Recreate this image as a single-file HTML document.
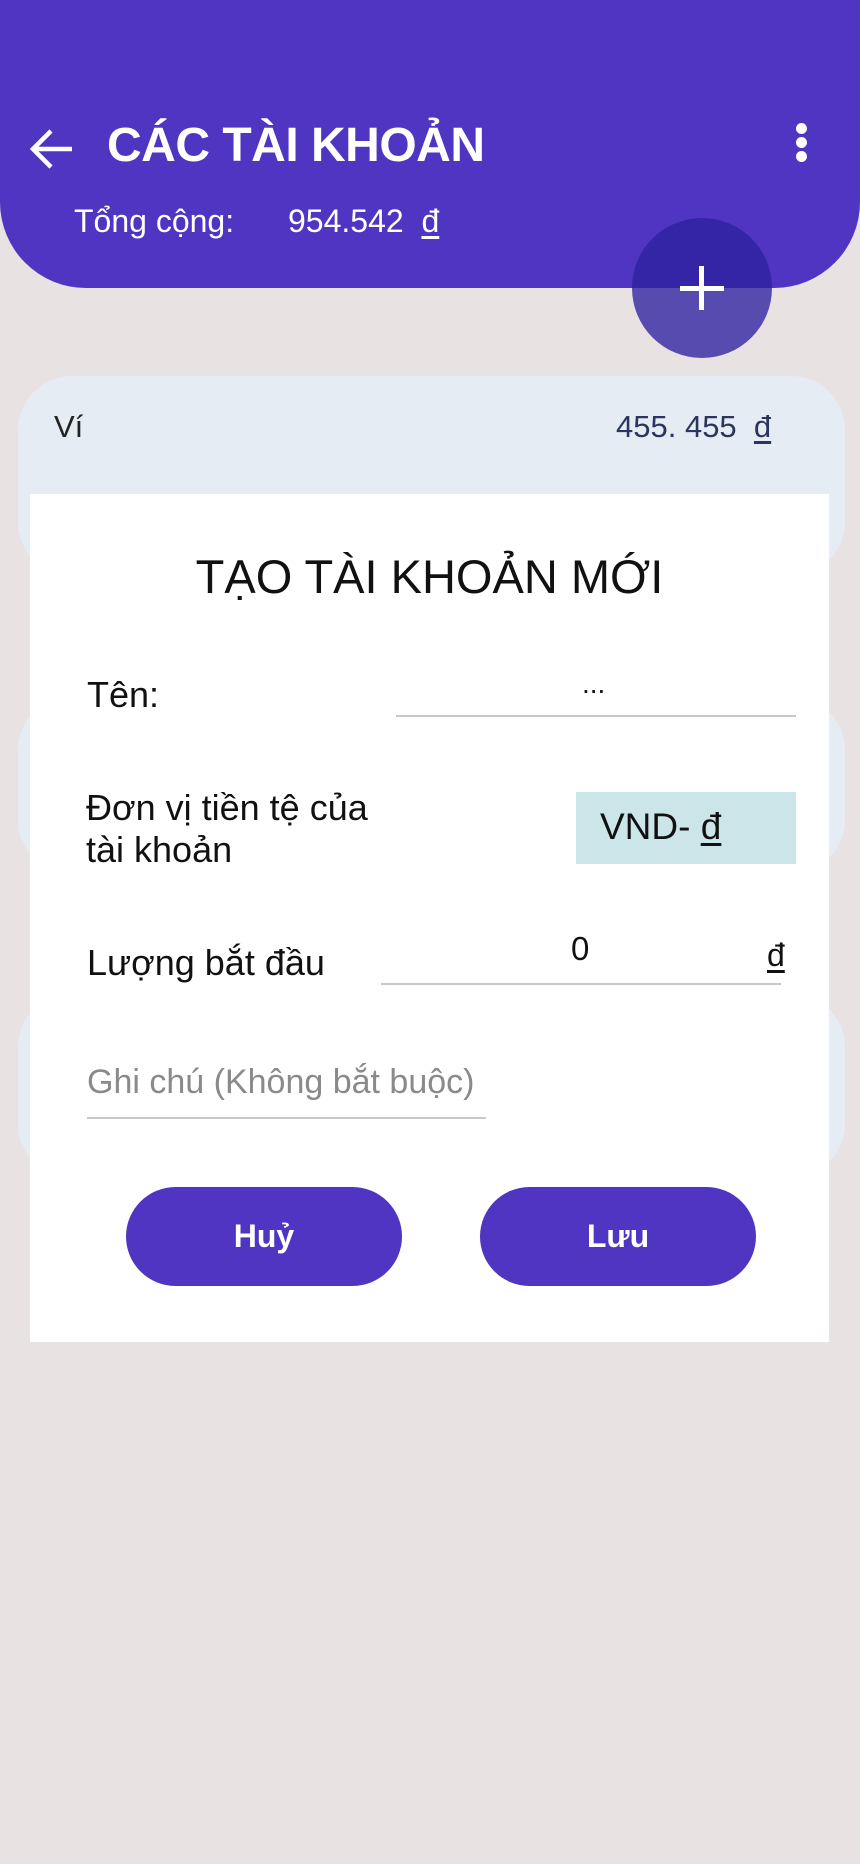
<!DOCTYPE html>
<html><head><meta charset="utf-8"><style>
*{margin:0;padding:0;box-sizing:border-box}
body{width:860px;height:1864px;background:#e8e2e2;position:relative;overflow:hidden;font-family:"Liberation Sans","Noto Sans CJK SC",sans-serif}
.abs{position:absolute}
.hdr{left:0;top:0;width:860px;height:288px;background:#4f35c2;border-radius:0 0 86px 86px}
.card{left:18px;width:827px;background:#e5ecf4;border-radius:54px}
.dlg{left:30px;top:494px;width:799px;height:848px;background:#fff}
.lbl{color:#111;font-size:36px;line-height:42px}
.line{height:2px;background:#c8c8c8}
.btn{width:276px;height:99px;border-radius:50px;background:#4f35c2;color:#fff;font-weight:bold;font-size:32px;display:flex;align-items:center;justify-content:center}
u{text-decoration:underline;text-underline-offset:4px}
</style></head><body>
<div class="abs hdr"></div>
<svg class="abs" style="left:28px;top:128px" width="46" height="42" viewBox="0 0 46 42"><path d="M44 21H5M23 3L5 21l18 18" stroke="#fff" stroke-width="4.5" fill="none"/></svg>
<div class="abs" style="left:107px;top:118px;color:#fff;font-weight:bold;font-size:48px;line-height:56px;letter-spacing:-0.5px">CÁC TÀI KHOẢN</div>
<div class="abs" style="left:796px;top:123px;width:11px;height:11px;border-radius:6px;background:#fff"></div>
<div class="abs" style="left:796px;top:137px;width:11px;height:11px;border-radius:6px;background:#fff"></div>
<div class="abs" style="left:796px;top:151px;width:11px;height:11px;border-radius:6px;background:#fff"></div>
<div class="abs" style="left:74px;top:202px;color:#fff;font-size:32px;line-height:38px">Tổng cộng:</div>
<div class="abs" style="left:288px;top:202px;color:#fff;font-size:32px;line-height:38px">954.542 &nbsp;<u>đ</u></div>
<div class="abs" style="left:632px;top:218px;width:140px;height:140px;border-radius:70px;overflow:hidden">
<div style="height:70px;background:#3424a6"></div><div style="height:70px;background:#584bb0"></div></div>
<div class="abs" style="left:680px;top:286px;width:44px;height:5px;background:#fff"></div>
<div class="abs" style="left:699px;top:266px;width:5px;height:44px;background:#fff"></div>
<div class="abs card" style="top:376px;height:200px"></div>
<div class="abs card" style="top:696px;height:178px"></div>
<div class="abs card" style="top:993px;height:185px"></div>
<div class="abs" style="left:54px;top:408px;color:#222;font-size:31px;line-height:38px">Ví</div>
<div class="abs" style="left:616px;top:408px;color:#2a3560;font-size:31px;line-height:38px">455. 455 &nbsp;<u>đ</u></div>
<div class="abs dlg"></div>
<div class="abs" style="left:30px;width:799px;top:549px;text-align:center;font-size:47px;line-height:56px;color:#111">TẠO TÀI KHOẢN MỚI</div>
<div class="abs lbl" style="left:87px;top:674px">Tên:</div>
<div class="abs" style="left:582px;top:668px;font-size:28px;color:#111">...</div>
<div class="abs line" style="left:396px;top:715px;width:400px"></div>
<div class="abs lbl" style="left:86px;top:787px">Đơn vị tiền tệ của<br>tài khoản</div>
<div class="abs" style="left:576px;top:792px;width:220px;height:72px;background:#cce5e8"></div>
<div class="abs" style="left:600px;top:806px;font-size:37px;line-height:42px;color:#111">VND- <u>đ</u></div>
<div class="abs lbl" style="left:87px;top:942px">Lượng bắt đầu</div>
<div class="abs" style="left:571px;top:930px;font-size:33px;color:#111">0</div>
<div class="abs" style="left:767px;top:937px;font-size:32px;color:#111"><u>đ</u></div>
<div class="abs line" style="left:381px;top:983px;width:400px"></div>
<div class="abs" style="left:87px;top:1062px;font-size:34px;line-height:40px;color:#8a8a8a">Ghi chú (Không bắt buộc)</div>
<div class="abs line" style="left:87px;top:1117px;width:399px"></div>
<div class="abs btn" style="left:126px;top:1187px">Huỷ</div>
<div class="abs btn" style="left:480px;top:1187px">Lưu</div>
</body></html>
